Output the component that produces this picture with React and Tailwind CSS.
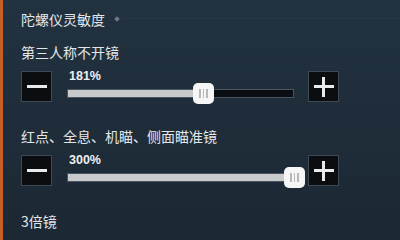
import React from 'react';

const sections = [
  { label: '第三人称不开镜', value: 181, pos: 0.6, gapTop: 'mt-0' },
  { label: '红点、全息、机瞄、侧面瞄准镜', value: 300, pos: 1, gapTop: 'mt-[17px]' },
  { label: '3倍镜', value: 202, pos: 0.67, gapTop: 'mt-[18px]' },
];

const StepButton = ({ plus }) => (
  <div className="relative w-[31px] h-[31px] shrink-0 bg-[#0b0d11] border border-[#3e4954]">
    <div className="absolute left-[5px] top-[13px] w-[20px] h-[3px] bg-[#e8eaec]" />
    {plus && <div className="absolute left-[13px] top-[5px] w-[3px] h-[20px] bg-[#e8eaec]" />}
  </div>
);

const Slider = ({ value, pos }) => {
  // thumb centre sits at pos * track width
  const pct = `${pos * 100}%`;
  return (
    <div className="flex-1 min-w-0">
      <div className="h-[14px] -mt-[2px] leading-[14px] text-[12.5px] font-bold text-[#eef0f2] pl-[2px] font-['Liberation_Sans',sans-serif]">
        {value}%
      </div>
      <div className="relative h-[21px] flex items-center">
        <div className="relative w-full h-[9px] bg-[#0a0d11] border border-[#4a5560]">
          <div className="absolute left-0 top-0 bottom-0 bg-[#c8cacb]" style={{ width: pct }} />
        </div>
        <div
          className="absolute top-0 w-[21px] h-[21px] -ml-[10px] rounded-[5px] bg-[#f6f6f6] flex items-center justify-center gap-[2px]"
          style={{ left: pct }}
        >
          <span className="w-[1.5px] h-[9px] bg-[#b8b8b8]" />
          <span className="w-[1.5px] h-[9px] bg-[#b8b8b8]" />
          <span className="w-[1.5px] h-[9px] bg-[#b8b8b8]" />
        </div>
      </div>
    </div>
  );
};

export default function App() {
  return (
    <div className="w-[400px] h-[240px] overflow-hidden flex bg-[#1f2d3a] font-['Noto_Sans_CJK_SC',sans-serif] text-[#e2e6ea]">
      <div className="w-[3px] shrink-0 bg-[#c45f28]" />
      <div className="flex-1 min-w-0 pl-[18px] bg-gradient-to-b from-[#223240] to-[#1c2834]">
        <div className="h-[37px] flex items-center">
          <span className="text-[14px] leading-none">陀螺仪灵敏度</span>
          <span className="ml-[10px] w-[4px] h-[4px] rotate-45 bg-[#6d7983]" />
          <span className="ml-[3px] flex-1 h-px bg-[#293845]" />
        </div>

        {sections.map((s) => (
          <div key={s.label} className={s.gapTop}>
            <div className="h-[30px] flex items-center text-[14px] leading-none">{s.label}</div>
            <div className="mt-[4px] flex items-start pr-[61px]">
              <StepButton />
              <div className="ml-[15px] mr-[14px] flex-1 flex">
                <Slider value={s.value} pos={s.pos} />
              </div>
              <StepButton plus />
            </div>
          </div>
        ))}
      </div>
    </div>
  );
}
